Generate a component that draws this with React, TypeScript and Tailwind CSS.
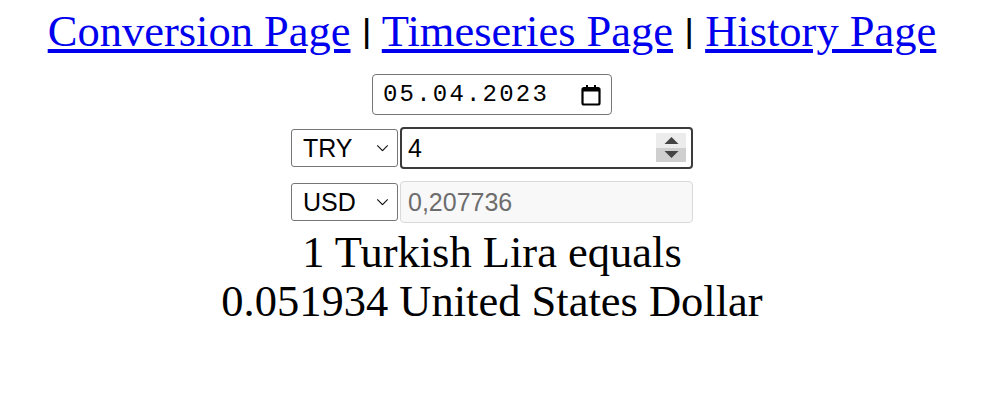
import { useState } from 'react';

const links = ['Conversion Page', 'Timeseries Page', 'History Page'];

function Chevron() {
  return (
    <svg viewBox="0 0 14 8" className="pointer-events-none absolute right-[9px] top-1/2 h-[7px] w-[13px] -translate-y-1/2">
      <path d="M1 1l6 6 6-6" fill="none" stroke="#111" strokeWidth="1.3" />
    </svg>
  );
}

function CurrencySelect({ value }: { value: string }) {
  return (
    <div className="relative h-[38px] w-[107px]">
      <select
        defaultValue={value}
        className="h-full w-full appearance-none rounded-[3px] border border-[#767676] bg-white pl-[11px] text-[25px] leading-none text-black font-['Liberation_Sans',Arial,sans-serif] outline-none"
      >
        <option>{value}</option>
      </select>
      <Chevron />
    </div>
  );
}

export default function App() {
  const [amount, setAmount] = useState('4');

  return (
    <div className="flex w-full flex-col items-center pt-[6px] pr-[12px] font-['Liberation_Serif','Times_New_Roman',serif] text-black">
      {/* Nav */}
      <div className="text-[44.5px] leading-[51px] whitespace-nowrap">
        {links.map((l, i) => (
          <span key={l}>
            {i > 0 && (
              <>
                {' '}
                <span className="inline-block scale-y-[0.75] font-bold">|</span>{' '}
              </>
            )}
            <a href="#" className="text-[#0000ee] underline">
              {l}
            </a>
          </span>
        ))}
      </div>

      {/* Date */}
      <div className="mt-[17px] flex h-[41px] w-[240px] items-center justify-between rounded-[4px] border border-[#767676] pl-[10px] pr-[10px]">
        <span className="font-['Liberation_Mono','Courier_New',monospace] text-[24px] tracking-[2.2px] leading-none">05.04.2023</span>
        <svg viewBox="0 0 20 22" className="h-[22px] w-[20px]">
          <rect x="1.5" y="4" width="17" height="16.5" rx="1.5" fill="none" stroke="#000" strokeWidth="2.2" />
          <rect x="1.5" y="4" width="17" height="3.5" fill="#000" />
          <rect x="5" y="1" width="2" height="4" fill="#000" />
          <rect x="13" y="1" width="2" height="4" fill="#000" />
        </svg>
      </div>

      {/* From */}
      <div className="mt-[12px] flex items-center gap-[2px]">
        <CurrencySelect value="TRY" />
        <div className="relative flex h-[42px] w-[293px] items-center rounded-[4px] border-2 border-[#3b3b3b] bg-white">
          <input
            value={amount}
            onChange={e => setAmount(e.target.value)}
            className="h-full w-full bg-transparent pl-[6px] text-[25px] outline-none font-['Liberation_Sans',Arial,sans-serif]"
          />
          <div className="absolute right-[5px] top-[4px] flex h-[29px] w-[30px] flex-col">
            <div className="flex flex-1 items-center justify-center bg-[#ececec]">
              <svg viewBox="0 0 16 8" className="h-[7px] w-[15px]">
                <path d="M8 0L16 8H0z" fill="#444" />
              </svg>
            </div>
            <div className="flex flex-1 items-center justify-center bg-[#cfcfcf]">
              <svg viewBox="0 0 16 8" className="h-[7px] w-[15px]">
                <path d="M0 0H16L8 8z" fill="#444" />
              </svg>
            </div>
          </div>
        </div>
      </div>

      {/* To */}
      <div className="mt-[12px] flex items-center gap-[2px]">
        <CurrencySelect value="USD" />
        <input
          disabled
          value="0,207736"
          className="h-[42px] w-[293px] rounded-[4px] border border-[#d9d9d9] bg-[#f8f8f8] pl-[7px] text-[25px] text-[#6d6d6d] font-['Liberation_Sans',Arial,sans-serif]"
        />
      </div>

      {/* Result */}
      <div className="mt-[5px] text-center text-[44.5px] leading-[49px]">
        <div>1 Turkish Lira equals</div>
        <div>0.051934 United States Dollar</div>
      </div>
    </div>
  );
}
